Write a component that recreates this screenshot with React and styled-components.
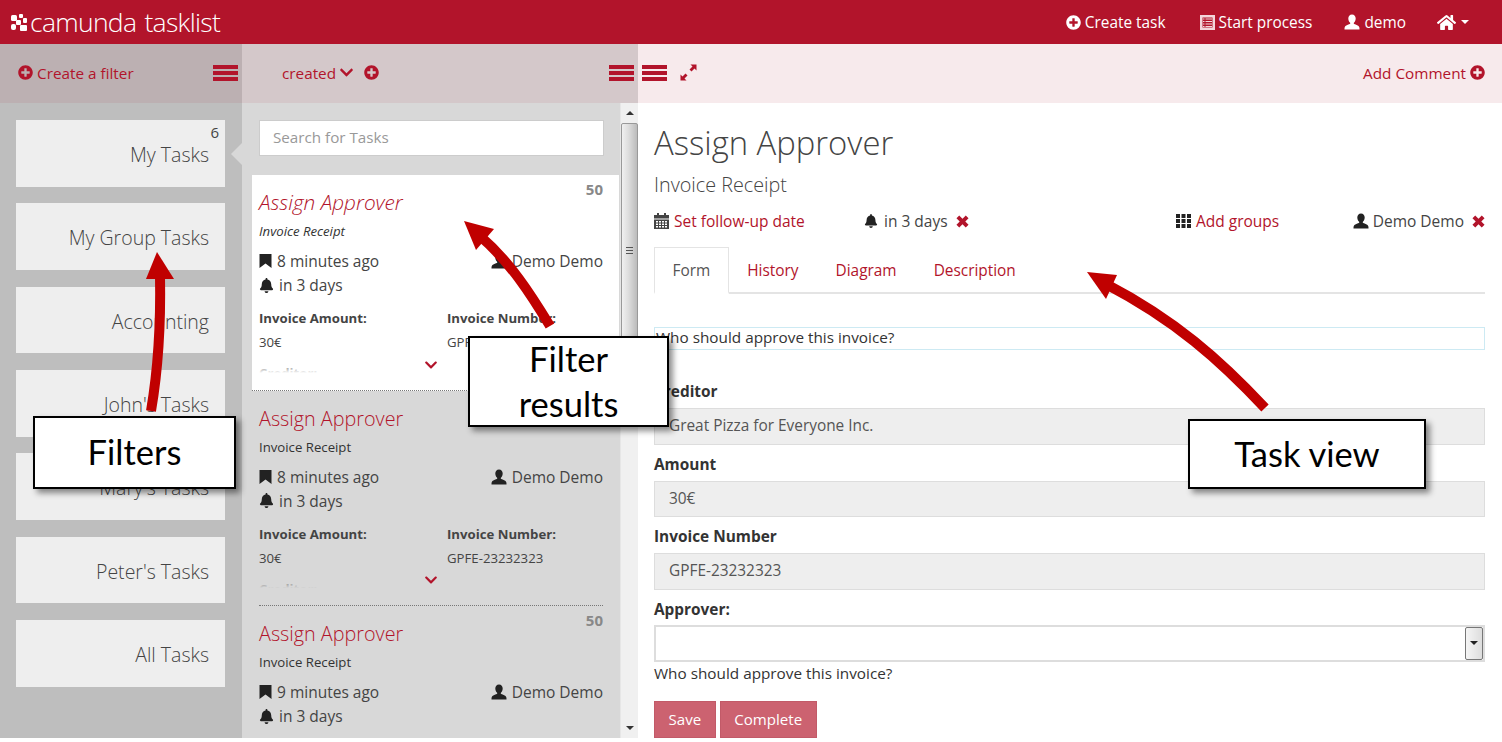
import React from 'react';
import styled, { createGlobalStyle } from 'styled-components';
import { FaPlusCircle, FaHome, FaBell, FaChevronDown } from 'react-icons/fa';

const RED = '#b2142b';

const GlobalStyle = createGlobalStyle`
  html, body {
    margin: 0;
    padding: 0;
    background: #fff;
    overflow: hidden;
  }
  body {
    font-family: "Open Sans", "Liberation Sans", sans-serif;
    font-size: 15.4px;
    color: #333;
  }
  * {
    box-sizing: border-box;
  }
`;

const Page = styled.div`
  position: relative;
  width: 1502px;
  height: 738px;
  overflow: hidden;
  display: flex;
  flex-direction: column;
`;

/* top bar */
const Header = styled.header`
  height: 44px;
  flex: none;
  background: ${RED};
  color: #fff;
  display: flex;
  align-items: center;
  padding: 0 33px 0 11px;
`;

const Brand = styled.div`
  display: flex;
  align-items: center;
  gap: 3px;
  flex: 1;
  font-weight: 300;
  font-size: 26.5px;
  line-height: 44px;
  letter-spacing: -0.7px;
  word-spacing: 2px;
`;

const Nav = styled.nav`
  display: flex;
  align-items: center;
  font-size: 15.4px;
`;

const NavItem = styled.span`
  display: flex;
  align-items: center;
  gap: 4px;
  margin-left: ${p => p.$gap}px;
  svg {
    display: block;
  }
`;

const Caret = styled.span`
  width: 0;
  height: 0;
  margin-left: 1px;
  border-left: 4px solid transparent;
  border-right: 4px solid transparent;
  border-top: 4px solid #fff;
`;

/* toolbars */
const Toolbars = styled.div`
  height: 59px;
  flex: none;
  display: grid;
  grid-template-columns: 242px 396px 1fr;
`;

const Toolbar = styled.div`
  display: flex;
  align-items: center;
  background: ${p => p.$bg};
  color: ${RED};
  font-size: 15.3px;
  padding: ${p => p.$pad};
  svg {
    display: block;
    flex: none;
  }
`;

const ToolLabel = styled.span`
  display: flex;
  align-items: center;
  gap: ${p => p.$gap || 4}px;
  margin-left: ${p => p.$ml || 0}px;
`;

const Spacer = styled.div`
  flex: 1;
`;

const Burger = styled.span`
  display: block;
  width: 25px;
  height: 16px;
  margin-top: 1px;
  background: linear-gradient(
    ${RED} 0 4px,
    transparent 4px 6px,
    ${RED} 6px 10px,
    transparent 10px 12px,
    ${RED} 12px 16px
  );
`;

/* columns */
const Columns = styled.div`
  flex: 1;
  min-height: 0;
  display: grid;
  grid-template-columns: 242px 396px 1fr;
`;

const FilterColumn = styled.aside`
  background: #bebebe;
  padding: 17px 17px 0 16px;
  display: flex;
  flex-direction: column;
  gap: 16.67px;
`;

const FilterCard = styled.div`
  position: relative;
  height: 66.67px;
  flex: none;
  background: #eee;
  font-weight: 300;
  font-size: 19.5px;
  color: #444;
  text-align: right;
  padding: 21px 16px 0 0;
  line-height: 28px;
`;

const FilterCount = styled.span`
  position: absolute;
  top: 2px;
  right: 6px;
  font-size: 15px;
  font-weight: 400;
  line-height: 20px;
  color: #444;
`;

const ActiveNotch = styled.span`
  position: absolute;
  top: 23px;
  right: -17px;
  width: 0;
  height: 0;
  border-top: 11px solid transparent;
  border-bottom: 11px solid transparent;
  border-right: 11px solid #d8d8d8;
`;

const ListColumn = styled.section`
  background: #d8d8d8;
  display: flex;
  overflow: hidden;
`;

const ListBody = styled.div`
  width: 378px;
  flex: none;
  padding-left: 10px;
  overflow: hidden;
`;

const SearchWrap = styled.div`
  padding: 17px 16px 19px 7px;
`;

const SearchBox = styled.div`
  height: 36px;
  background: #fff;
  border: 1px solid #ccc;
  padding: 0 13px;
  line-height: 33px;
  font-size: 15.2px;
  color: #999;
`;

const TaskCard = styled.article`
  position: relative;
  height: 215.5px;
  width: 367px;
  flex: none;
  padding: 0 16px 0 7px;
  background: ${p => (p.$active ? '#fff' : 'transparent')};
  overflow: hidden;
  &::after {
    content: '';
    position: absolute;
    left: ${p => (p.$active ? 0 : 7)}px;
    right: ${p => (p.$active ? 0 : 16)}px;
    bottom: 0;
    border-bottom: 1px dotted #777;
  }
`;

const Priority = styled.span`
  position: absolute;
  top: 4px;
  right: 16px;
  font-weight: 700;
  font-size: 15px;
  line-height: 20px;
  color: #888;
`;

const TaskTitle = styled.div`
  font-weight: 300;
  font-style: ${p => (p.$active ? 'italic' : 'normal')};
  font-size: ${p => (p.$active ? 20.8 : 19.8)}px;
  line-height: 28px;
  color: ${RED};
  padding-top: ${p => (p.$active ? 13 : 14)}px;
`;

const TaskProcess = styled.div`
  font-style: ${p => (p.$active ? 'italic' : 'normal')};
  font-size: 13.2px;
  line-height: 18px;
  margin-top: ${p => (p.$active ? 6 : 5)}px;
  color: #333;
`;

const TaskMeta = styled.div`
  display: flex;
  justify-content: space-between;
  margin-top: 9px;
`;

const IconText = styled.span`
  display: flex;
  align-items: center;
  gap: ${p => p.$gap || 5}px;
  font-size: 15.5px;
  line-height: 24px;
  white-space: nowrap;
  color: ${p => p.$color || '#444'};
  svg {
    display: block;
    flex: none;
  }
`;

const TaskVars = styled.div`
  display: grid;
  grid-template-columns: 188px 1fr;
  margin-top: 9px;
`;

const VarName = styled.div`
  font-weight: 700;
  font-size: 13.2px;
  line-height: 24px;
  color: #444;
`;

const CreditorName = styled(VarName)`
  margin-top: 7px;
`;

const VarValue = styled.div`
  font-size: 13.2px;
  line-height: 24px;
  color: #444;
`;

const Fade = styled.div`
  position: absolute;
  left: 0;
  right: 0;
  bottom: 1px;
  height: 25px;
  background: linear-gradient(
    ${p => (p.$active ? 'rgba(255,255,255,0.3)' : 'rgba(216,216,216,0.3)')},
    ${p => (p.$active ? '#fff' : '#d8d8d8')} 32%
  );
`;

const Expander = styled.span`
  position: absolute;
  left: 172px;
  bottom: 19px;
  color: ${RED};
  svg {
    display: block;
  }
`;

const Scrollbar = styled.div`
  width: 18px;
  flex: none;
  background: #f0f0f0;
  border-left: 1px solid #e6e6e6;
  display: flex;
  flex-direction: column;
  align-items: center;
`;

const ScrollArrow = styled.span`
  height: 20px;
  flex: none;
  display: flex;
  align-items: center;
  &::before {
    content: '';
    border-left: 4px solid transparent;
    border-right: 4px solid transparent;
    ${p => (p.$down ? 'border-top' : 'border-bottom')}: 4px solid #333;
  }
`;

const ScrollThumb = styled.div`
  width: 17px;
  height: 254px;
  flex: none;
  border: 1px solid #999;
  border-radius: 2px;
  background: linear-gradient(90deg, #f0f0f0, #dcdcdc 45%, #bbb);
  display: flex;
  align-items: center;
  justify-content: center;
`;

const Grip = styled.span`
  width: 7px;
  height: 7px;
  background: repeating-linear-gradient(#555 0 1px, transparent 1px 3px);
`;

const ScrollTrack = styled.div`
  flex: 1;
`;

/* task view */
const TaskView = styled.main`
  background: #fff;
  padding: 0 17px 0 16px;
  overflow: hidden;
`;

const ViewTitle = styled.h1`
  margin: 0;
  padding-top: 18px;
  font-weight: 300;
  font-size: 32.8px;
  line-height: 44px;
  color: #444;
`;

const ViewSubtitle = styled.div`
  font-weight: 300;
  font-size: 19.8px;
  line-height: 26px;
  margin-top: 7px;
  color: #444;
`;

const ViewMeta = styled.div`
  display: grid;
  grid-template-columns: 210px 312px 176px 1fr;
  margin-top: 11px;
  height: 24px;
`;

const MetaEnd = styled.div`
  display: flex;
  justify-content: flex-end;
  align-items: center;
  gap: 8px;
  color: ${RED};
  svg {
    display: block;
  }
`;

const DismissGap = styled.span`
  margin-left: -4px;
`;

const Tabs = styled.div`
  display: flex;
  margin-top: 14px;
  height: 47px;
  border-bottom: 2px solid #e4e4e4;
`;

const Tab = styled.div`
  height: 47px;
  padding: 0 17.5px;
  line-height: 45px;
  font-size: 15.4px;
  color: ${p => (p.$active ? '#555' : RED)};
  background: ${p => (p.$active ? '#fff' : 'transparent')};
  border: ${p => (p.$active ? '1px solid #e4e4e4' : '1px solid transparent')};
  border-bottom: ${p => (p.$active ? '2px solid #fff' : 'none')};
`;

const Form = styled.div`
  padding-top: 33px;
`;

const HelpBox = styled.div`
  height: 23px;
  border: 1px solid #cdeaf3;
  padding-left: 1px;
  font-size: 15.3px;
  line-height: 19px;
  margin-bottom: 32px;
`;

const FieldLabel = styled.div`
  font-weight: 700;
  font-size: 15.4px;
  line-height: 20px;
  color: #333;
  margin-bottom: 6px;
`;

const ReadOnlyField = styled.div`
  height: 36.5px;
  background: #eee;
  border: 1px solid #ddd;
  padding: 0 14px;
  font-size: 15.4px;
  line-height: 34px;
  color: #555;
  margin-bottom: 10.17px;
`;

const SelectBox = styled.div`
  position: relative;
  height: 37px;
  margin-top: -1px;
  background: #fff;
  border: 2px solid #ddd;
`;

const SelectArrow = styled.span`
  position: absolute;
  top: 0;
  right: 0;
  bottom: 0;
  width: 18px;
  background: linear-gradient(90deg, #f5f5f5, #ddd);
  border: 1px solid #777;
  border-radius: 2px;
  display: flex;
  align-items: center;
  justify-content: center;
  &::before {
    content: '';
    border-left: 4px solid transparent;
    border-right: 4px solid transparent;
    border-top: 4px solid #222;
  }
`;

const Help = styled.div`
  font-size: 15.3px;
  line-height: 20px;
  margin-top: 1.5px;
`;

const Buttons = styled.div`
  display: flex;
  gap: 4px;
  margin-top: 17.5px;
`;

const Button = styled.button`
  height: 37px;
  padding: 0 13.5px;
  border: 1px solid #c25a68;
  background: #cc6270;
  color: #fff;
  font-family: inherit;
  font-size: 15.1px;
`;

/* annotations drawn over the screenshot */
const Overlay = styled.svg`
  position: absolute;
  top: 0;
  left: 0;
  pointer-events: none;
`;

const Callout = styled.div`
  position: absolute;
  left: ${p => p.$x}px;
  top: ${p => p.$y}px;
  width: ${p => p.$w}px;
  height: ${p => p.$h}px;
  background: #fff;
  border: 2px solid #000;
  box-shadow: 4px 4px 6px rgba(0, 0, 0, 0.45);
  display: flex;
  align-items: center;
  justify-content: center;
  padding-bottom: 2px;
  text-align: center;
  font-family: Lato, "Open Sans", sans-serif;
  font-size: 34.5px;
  line-height: 45px;
  color: #000;
`;

/* icons */
const UserIcon = ({ size = 16, color = 'currentColor' }) => (
  <svg width={size} height={size} viewBox="0 0 16 16" fill={color}>
    <path d="M8 0.5c2.3 0 3.7 1.7 3.7 4 0 1.8-.8 3.4-1.8 4.2-.3.3-.2 1 .3 1.3 1.7.8 4.6 1.4 5.1 3.2.2.7.2 1.5.2 2.3H.5c0-.8 0-1.6.2-2.3.5-1.8 3.4-2.4 5.1-3.2.5-.3.6-1 .3-1.3C5.1 7.9 4.3 6.3 4.3 4.5c0-2.3 1.4-4 3.7-4z" />
  </svg>
);

const RemoveIcon = () => (
  <svg width="13" height="13" viewBox="0 0 14 14" fill={RED}>
    <path d="M3.5 0.5L7 4L10.5 0.5L13.5 3.5L10 7L13.5 10.5L10.5 13.5L7 10L3.5 13.5L0.5 10.5L4 7L0.5 3.5Z" />
  </svg>
);

const BookmarkIcon = () => (
  <svg width="13" height="14" viewBox="0 0 13 14" fill="#222">
    <path d="M0.5 0H12.5V14L6.5 9.5L0.5 14Z" />
  </svg>
);

const ListAltIcon = () => (
  <svg width="15" height="15" viewBox="0 0 15 15">
    <rect x="0.5" y="0.5" width="14" height="14" fill="#f3d5da" stroke="#f3d5da" />
    <rect x="2.5" y="2.5" width="10" height="10" fill={RED} />
    <path d="M3 4h1.5M3 6.5h1.5M3 9h1.5M3 11.5h1.5M5.5 4h6.5M5.5 6.5h6.5M5.5 9h6.5M5.5 11.5h6.5" stroke="#f3d5da" strokeWidth="1" />
  </svg>
);

const CalendarIcon = () => (
  <svg width="15" height="16" viewBox="0 0 15 16" fill="#444">
    <rect x="3" y="0" width="2" height="3" />
    <rect x="10" y="0" width="2" height="3" />
    <rect x="0" y="2" width="15" height="3.5" />
    <path d="M0 6.5h15V16H0zM2 8v1.5h2V8zm3 0v1.5h2V8zm3 0v1.5h2V8zm3 0v1.5h2V8zM2 10.5V12h2v-1.5zm3 0V12h2v-1.5zm3 0V12h2v-1.5zm3 0V12h2v-1.5zM2 13v1.5h2V13zm3 0v1.5h2V13zm3 0v1.5h2V13zm3 0v1.5h2V13z" fillRule="evenodd" />
  </svg>
);

const GroupsIcon = () => (
  <svg width="15" height="14" viewBox="0 0 15 14" fill="#222">
    {[0, 5.5, 11].map(x =>
      [0, 5, 10].map(y => <rect key={`${x}-${y}`} x={x} y={y} width="4" height="4" />)
    )}
  </svg>
);

const ExpandIcon = () => (
  <svg width="17" height="17" viewBox="0 0 17 17" fill={RED}>
    <path d="M10.5 0.5H16.5V6.5L14.5 4.5L11.5 7.5L9.5 5.5L12.5 2.5Z" />
    <path d="M6.5 16.5H0.5V10.5L2.5 12.5L5.5 9.5L7.5 11.5L4.5 14.5Z" />
  </svg>
);

const LogoIcon = () => (
  <svg width="16" height="17" viewBox="0 0 16 17" fill="#fff">
    <rect x="0" y="1" width="6" height="6" rx="1.5" />
    <rect x="8" y="0" width="4" height="4" rx="1" />
    <rect x="12" y="4" width="4" height="5" rx="1" />
    <rect x="5" y="6" width="5" height="5" rx="1" />
    <rect x="0" y="10" width="5" height="6" rx="2" />
    <rect x="9" y="11" width="7" height="6" rx="1" />
  </svg>
);

const filters = ['My Tasks', 'My Group Tasks', 'Accounting', "John's Tasks", "Mary's Tasks", "Peter's Tasks", 'All Tasks'];

const tasks = [
  { ago: '8 minutes ago', active: true, details: true },
  { ago: '8 minutes ago', details: true },
  { ago: '9 minutes ago' },
];

const Task = ({ ago, active, details }) => (
  <TaskCard $active={active}>
    <Priority>50</Priority>
    <TaskTitle $active={active}>Assign Approver</TaskTitle>
    <TaskProcess $active={active}>Invoice Receipt</TaskProcess>
    <TaskMeta>
      <IconText><BookmarkIcon />{ago}</IconText>
      <IconText><UserIcon size={16} color="#222" />Demo Demo</IconText>
    </TaskMeta>
    <IconText><FaBell size={15} color="#222" />in 3 days</IconText>
    {details && (
      <>
        <TaskVars>
          <div>
            <VarName>Invoice Amount:</VarName>
            <VarValue>30€</VarValue>
          </div>
          <div>
            <VarName>Invoice Number:</VarName>
            <VarValue>GPFE-23232323</VarValue>
          </div>
          <CreditorName>Creditor:</CreditorName>
        </TaskVars>
        <Fade $active={active} />
        <Expander><FaChevronDown size={14} /></Expander>
      </>
    )}
  </TaskCard>
);

const App = () => (
  <Page>
    <GlobalStyle />
    <Header>
      <Brand><LogoIcon />camunda tasklist</Brand>
      <Nav>
        <NavItem $gap={0}><FaPlusCircle size={15} />Create task</NavItem>
        <NavItem $gap={34}><ListAltIcon />Start process</NavItem>
        <NavItem $gap={32}><UserIcon size={16} />demo</NavItem>
        <NavItem $gap={31}><FaHome size={19} /><Caret /></NavItem>
      </Nav>
    </Header>

    <Toolbars>
      <Toolbar $bg="#bcb0b2" $pad="0 4px 2px 18px">
        <ToolLabel><FaPlusCircle size={15} />Create a filter</ToolLabel>
        <Spacer />
        <Burger />
      </Toolbar>
      <Toolbar $bg="#d4c8ca" $pad="0 4px 2px 40px">
        <ToolLabel $gap={3}>created<FaChevronDown size={15} /></ToolLabel>
        <ToolLabel $ml={10}><FaPlusCircle size={15} /></ToolLabel>
        <Spacer />
        <Burger />
      </Toolbar>
      <Toolbar $bg="#f7eaec" $pad="0 17px 2px 4px">
        <Burger />
        <ToolLabel $ml={13}><ExpandIcon /></ToolLabel>
        <Spacer />
        <ToolLabel>Add Comment<FaPlusCircle size={15} /></ToolLabel>
      </Toolbar>
    </Toolbars>

    <Columns>
      <FilterColumn>
        {filters.map((name, i) => (
          <FilterCard key={name}>
            {i === 0 && <FilterCount>6</FilterCount>}
            {i === 0 && <ActiveNotch />}
            {name}
          </FilterCard>
        ))}
      </FilterColumn>

      <ListColumn>
        <ListBody>
          <SearchWrap><SearchBox>Search for Tasks</SearchBox></SearchWrap>
          {tasks.map((t, i) => <Task key={i} {...t} />)}
        </ListBody>
        <Scrollbar>
          <ScrollArrow />
          <ScrollThumb><Grip /></ScrollThumb>
          <ScrollTrack />
          <ScrollArrow $down />
        </Scrollbar>
      </ListColumn>

      <TaskView>
        <ViewTitle>Assign Approver</ViewTitle>
        <ViewSubtitle>Invoice Receipt</ViewSubtitle>
        <ViewMeta>
          <IconText $color={RED}><CalendarIcon />Set follow-up date</IconText>
          <IconText $gap={6}>
            <FaBell size={14} color="#222" />in 3 days
            <DismissGap />
            <RemoveIcon />
          </IconText>
          <IconText $color={RED}><GroupsIcon />Add groups</IconText>
          <MetaEnd>
            <IconText $gap={4}><UserIcon size={16} color="#222" />Demo Demo</IconText>
            <RemoveIcon />
          </MetaEnd>
        </ViewMeta>
        <Tabs>
          <Tab $active>Form</Tab>
          <Tab>History</Tab>
          <Tab>Diagram</Tab>
          <Tab>Description</Tab>
        </Tabs>
        <Form>
          <HelpBox>Who should approve this invoice?</HelpBox>
          <FieldLabel>Creditor</FieldLabel>
          <ReadOnlyField>Great Pizza for Everyone Inc.</ReadOnlyField>
          <FieldLabel>Amount</FieldLabel>
          <ReadOnlyField>30€</ReadOnlyField>
          <FieldLabel>Invoice Number</FieldLabel>
          <ReadOnlyField>GPFE-23232323</ReadOnlyField>
          <FieldLabel>Approver:</FieldLabel>
          <SelectBox><SelectArrow /></SelectBox>
          <Help>Who should approve this invoice?</Help>
          <Buttons>
            <Button>Save</Button>
            <Button>Complete</Button>
          </Buttons>
        </Form>
      </TaskView>
    </Columns>

    <Overlay width="1502" height="738" viewBox="0 0 1502 738">
      <g fill="none" stroke="#c00000" strokeWidth="10">
        <path d="M151 411C158 370 161 330 160 276" />
        <path d="M550 326C530 293 510 262 480 236" />
        <path d="M1265 408C1220 360 1175 320 1106 284" />
      </g>
      <g fill="#c00000">
        <path d="M157 252L174 279H146Z" />
        <path d="M464 221L494 229L476 250Z" />
        <path d="M1087 272L1117 275L1106 299Z" />
      </g>
    </Overlay>
    <Callout $x={33} $y={416} $w={203} $h={73}>Filters</Callout>
    <Callout $x={468} $y={336} $w={201} $h={91}>Filter<br />results</Callout>
    <Callout $x={1188} $y={419} $w={238} $h={70}>Task view</Callout>
  </Page>
);

export default App;
